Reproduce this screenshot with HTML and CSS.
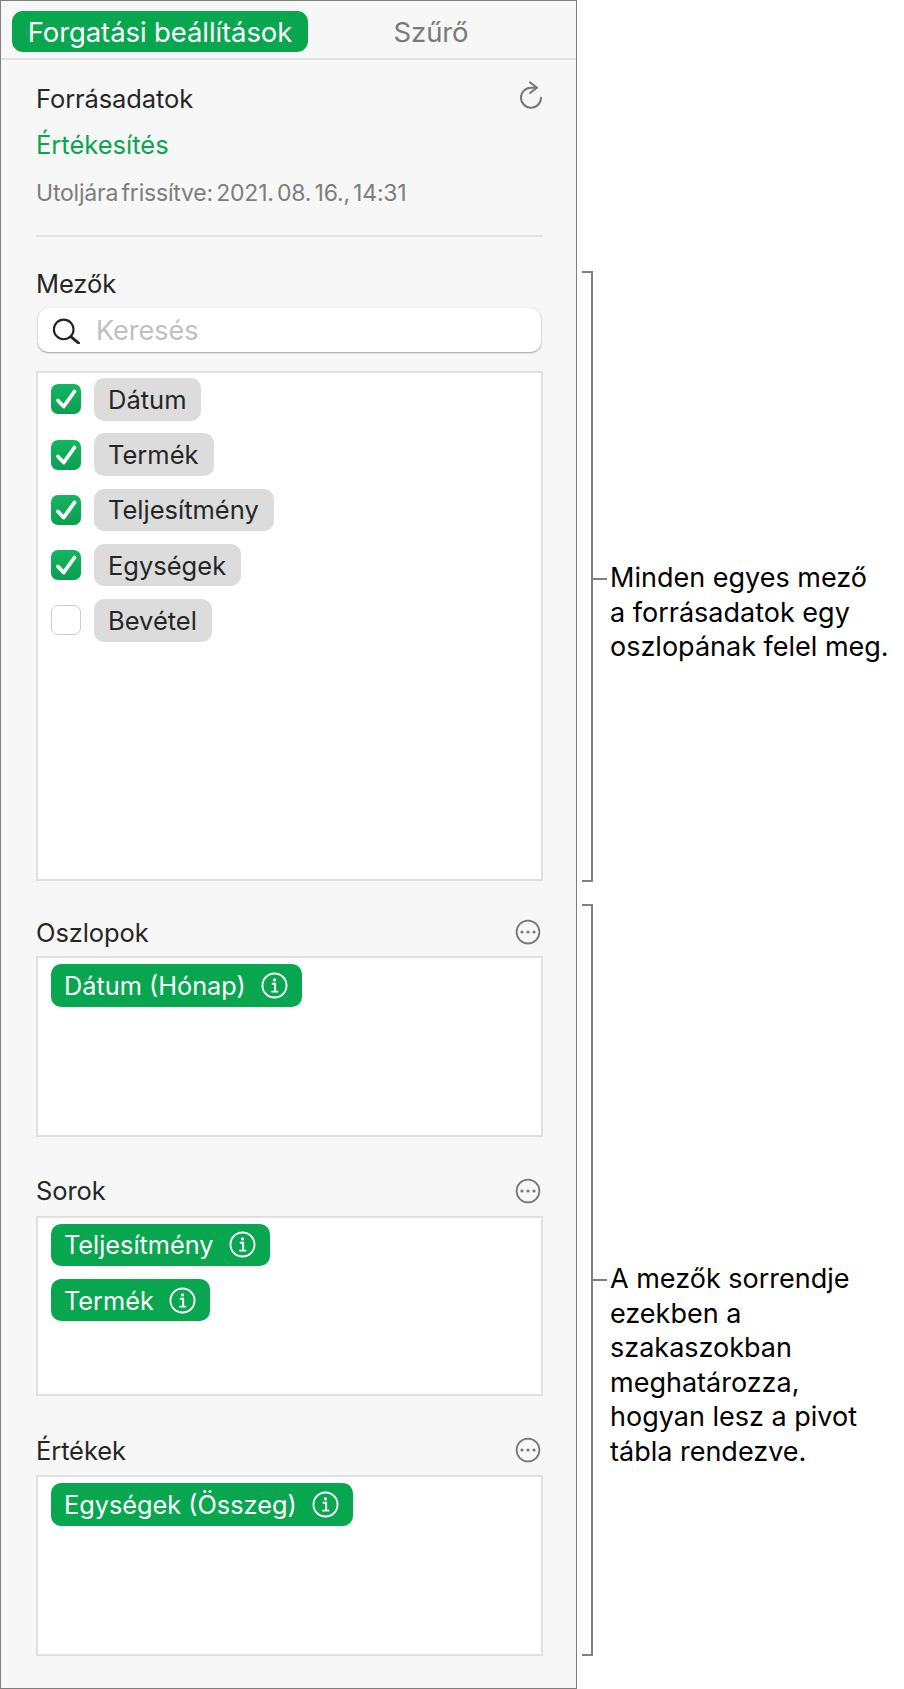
FILE: index.html
```html
<!DOCTYPE html>
<html lang="hu">
<head>
<meta charset="utf-8">
<title>Forgatási beállítások</title>
<link rel="stylesheet" href="styles.css">
</head>
<body>
<svg class="defs" width="0" height="0" aria-hidden="true">
  <symbol id="info" viewBox="0 0 26 26">
    <circle cx="13" cy="13" r="11.6" fill="none" stroke="currentColor" stroke-width="1.8"/>
    <circle cx="13" cy="7.6" r="1.5" fill="currentColor"/>
    <path d="M10.4 11.4H13.6V18.6M9.9 18.9H16.6" fill="none" stroke="currentColor" stroke-width="1.9"/>
  </symbol>
  <symbol id="more" viewBox="0 0 26 26">
    <circle cx="13" cy="13" r="11.4" fill="none" stroke="currentColor" stroke-width="1.8"/>
    <circle cx="7" cy="13" r="1.6" fill="currentColor"/>
    <circle cx="13" cy="13" r="1.6" fill="currentColor"/>
    <circle cx="19" cy="13" r="1.6" fill="currentColor"/>
  </symbol>
  <symbol id="check" viewBox="0 0 30 30">
    <path d="M7 16.5L12.7 22.5L23.5 7.5" fill="none" stroke="#fff" stroke-width="3.8" stroke-linecap="round" stroke-linejoin="round"/>
  </symbol>
</svg>
<div class="page">
  <main class="panel">
    <nav class="tabs">
      <span class="tab tab-active">Forgatási beállítások</span>
      <span class="tab">Szűrő</span>
    </nav>
    <section class="source">
      <div class="heading">
        <span>Forrásadatok</span>
        <svg class="icon-refresh" viewBox="0 0 24 28" width="24" height="28">
          <path d="M17.5 6.7H12A10 10 0 1 0 22 16.7" fill="none" stroke="#777" stroke-width="2" stroke-linecap="round"/>
          <path d="M11 1.4L18 6.7L11 12" fill="none" stroke="#777" stroke-width="2" stroke-linecap="round" stroke-linejoin="round"/>
        </svg>
      </div>
      <a class="source-link">Értékesítés</a>
      <p class="updated">Utoljára frissítve: 2021. 08. 16., 14:31</p>
    </section>
    <section class="fields">
      <div class="heading"><span>Mezők</span></div>
      <div class="search">
        <svg class="icon-search" viewBox="0 0 28 28" width="28" height="28">
          <circle cx="11.7" cy="13.4" r="9.8" fill="none" stroke="#222" stroke-width="2.1"/>
          <path d="M18.8 20.6L26.6 27" fill="none" stroke="#222" stroke-width="2.8" stroke-linecap="round"/>
        </svg>
        <span class="placeholder">Keresés</span>
      </div>
      <ul class="well field-list">
        <li class="field"><span class="box box-on"><svg width="30" height="30"><use href="#check"/></svg></span><span class="pill">Dátum</span></li>
        <li class="field"><span class="box box-on"><svg width="30" height="30"><use href="#check"/></svg></span><span class="pill">Termék</span></li>
        <li class="field"><span class="box box-on"><svg width="30" height="30"><use href="#check"/></svg></span><span class="pill">Teljesítmény</span></li>
        <li class="field"><span class="box box-on"><svg width="30" height="30"><use href="#check"/></svg></span><span class="pill">Egységek</span></li>
        <li class="field"><span class="box"></span><span class="pill">Bevétel</span></li>
      </ul>
    </section>
    <section class="group group-first">
      <div class="heading"><span>Oszlopok</span><svg class="icon-more" width="26" height="26"><use href="#more"/></svg></div>
      <div class="well drop">
        <span class="pill pill-green">Dátum (Hónap)<svg class="icon-info" width="27" height="27"><use href="#info"/></svg></span>
      </div>
    </section>
    <section class="group">
      <div class="heading"><span>Sorok</span><svg class="icon-more" width="26" height="26"><use href="#more"/></svg></div>
      <div class="well drop">
        <span class="pill pill-green">Teljesítmény<svg class="icon-info" width="27" height="27"><use href="#info"/></svg></span>
        <span class="pill pill-green">Termék<svg class="icon-info" width="27" height="27"><use href="#info"/></svg></span>
      </div>
    </section>
    <section class="group">
      <div class="heading"><span>Értékek</span><svg class="icon-more" width="26" height="26"><use href="#more"/></svg></div>
      <div class="well drop">
        <span class="pill pill-green">Egységek (Összeg)<svg class="icon-info" width="27" height="27"><use href="#info"/></svg></span>
      </div>
    </section>
  </main>
  <aside class="notes">
    <div class="note note-fields">
      <span class="bracket"></span>
      <span class="tick"></span>
      <p class="note-text">Minden egyes mező<br>a forrásadatok egy<br>oszlopának felel meg.</p>
    </div>
    <div class="note note-order">
      <span class="bracket"></span>
      <span class="tick"></span>
      <p class="note-text">A mezők sorrendje<br>ezekben a<br>szakaszokban<br>meghatározza,<br>hogyan lesz a pivot<br>tábla rendezve.</p>
    </div>
  </aside>
</div>
</body>
</html>
```
FILE: styles.css
```css
* { box-sizing: border-box; }
html, body { margin: 0; padding: 0; background: #fff; }
body { font-family: Inter, "Liberation Sans", sans-serif; color: #262626; }
.defs { position: absolute; }
.page { display: flex; width: 904px; height: 1689px; overflow: hidden; }

.panel {
  width: 577px;
  height: 1689px;
  background: #f7f7f7;
  border: 1px solid #7f7f7f;
  flex: none;
}
.tabs {
  display: flex;
  align-items: flex-start;
  height: 59px;
  padding: 10px 0 0 11px;
  border-bottom: 2px solid #e2e2e2;
}
.tab {
  display: flex;
  align-items: center;
  justify-content: center;
  height: 41px;
  width: 296px;
  border-radius: 11px;
  font-size: 27.5px;
  letter-spacing: -0.1px;
  color: #7a7a7a;
}
.tab + .tab { width: 246px; }
.tab-active { background: #07a64f; color: #fff; }

.source { margin: 0 33px 0 35px; padding-top: 20px; height: 177px; border-bottom: 2px solid #e2e2e2; }
.heading {
  display: flex;
  align-items: center;
  justify-content: space-between;
  height: 36px;
  font-size: 25.5px;
  letter-spacing: -0.1px;
  color: #262626;
}
.icon-refresh { margin: -6px 0 0; }
.source-link { display: block; margin-top: 11px; font-size: 25.5px; line-height: 36px; color: #07a64f; }
.updated {
  margin: 12px 0 0;
  font-size: 23px;
  line-height: 36px;
  letter-spacing: -0.2px;
  word-spacing: -3px;
  color: #7d7d7d;
  white-space: nowrap;
}

.fields { margin: 0 33px 0 35px; padding-top: 28px; }
.search {
  display: flex;
  align-items: center;
  height: 44px;
  margin: 7px 2px 19px;
  padding-left: 14px;
  background: #fff;
  border-radius: 10px;
  box-shadow: 0 1px 2px rgba(0,0,0,.35), 0 0 1px rgba(0,0,0,.15);
}
.placeholder { margin-left: 16px; font-size: 27px; color: #c0c0c0; }
.well { background: #fff; border: 2px solid #e0e0e0; margin: 0; }
.field-list {
  list-style: none;
  height: 510px;
  padding: 5px 0 0 13px;
  display: flex;
  flex-direction: column;
  gap: 12.75px;
}
.field { display: flex; align-items: center; gap: 13px; height: 42.5px; }
.box {
  width: 30px;
  height: 30px;
  border-radius: 7px;
  background: #fff;
  border: 1px solid #cfcfcf;
  flex: none;
}
.box-on {
  border: 0;
  background: linear-gradient(#14b562, #0a9f50);
}
.box svg { display: block; }
.pill {
  display: inline-flex;
  align-items: center;
  height: 42.5px;
  padding: 0 15px 0 14px;
  border-radius: 10px;
  background: #dcdcdc;
  font-size: 25.5px;
  color: #262626;
}
.pill-green {
  background: #07a64f;
  color: #fff;
  align-self: flex-start;
  gap: 15px;
  padding: 0 14px 0 13px;
  font-size: 25.3px;
}
.icon-info { color: #fff; }
.icon-more { color: #777; margin-right: 2px; }

.group { margin: 0 33px 0 35px; padding-top: 36px; }
.group-first { padding-top: 33px; }
.group .heading { height: 36px; margin-bottom: 7px; }
.group-first .heading { margin-bottom: 6px; }
.drop {
  height: 180.7px;
  padding: 6px 0 0 13px;
  display: flex;
  flex-direction: column;
  gap: 12.75px;
}

.notes { flex: none; padding-top: 271px; margin-left: 5px; }
.note { display: flex; align-items: flex-start; }
.note-fields { height: 611px; margin-bottom: 22px; }
.note-order { height: 752px; }
.bracket {
  width: 11px;
  height: 100%;
  border: 2px solid #808080;
  border-left: 0;
  flex: none;
}
.tick { width: 14px; height: 2px; background: #808080; flex: none; }
.note-fields .tick { margin-top: 307px; }
.note-fields .note-text { margin-top: 290px; }
.note-order .tick { margin-top: 375px; }
.note-order .note-text { margin-top: 358px; }
.note-text {
  margin: 0 0 0 3px;
  font-size: 27px;
  line-height: 34.5px;
  color: #000;
  white-space: nowrap;
}
```
